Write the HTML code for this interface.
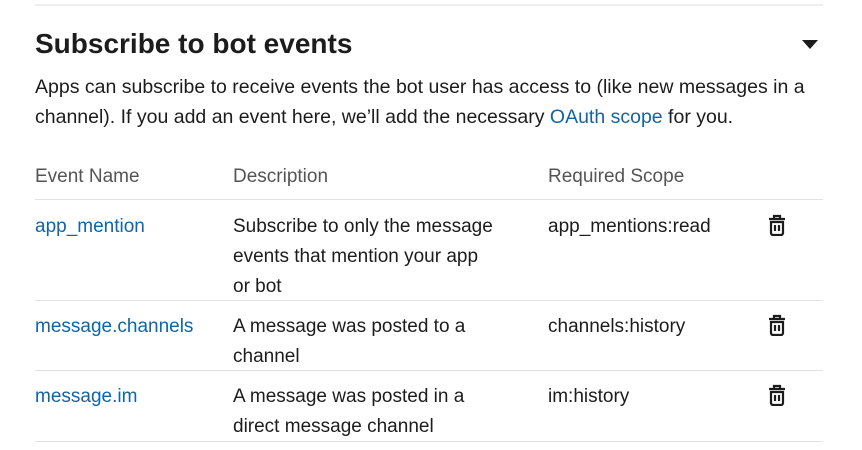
<!DOCTYPE html>
<html><head><style>
body{margin:0;width:862px;height:450px;background:#fff;font-family:"Liberation Sans",sans-serif;color:#1d1c1d;position:relative;overflow:hidden}
.a{position:absolute;white-space:nowrap;font-size:19px;line-height:30px}
.l{position:absolute;left:35px;width:788px;height:1px;background:#e2e2e2}
.h{color:#555455}
.b{color:#1264a3}
.d{color:#1d1c1d}
svg{position:absolute}
</style></head><body>
<div class="l" style="top:4px;height:2px;background:#eee"></div>
<div class="a" style="left:35px;top:27px;font-size:28px;font-weight:bold;line-height:34px">Subscribe to bot events</div>
<svg style="left:801px;top:39px" width="18" height="11"><path d="M1 1h16l-8 9z" fill="#1d1c1d"/></svg>
<div class="a" style="left:35px;top:72px;color:#1d1c1d;font-size:19.5px">Apps can subscribe to receive events the bot user has access to (like new messages in a<br>channel). If you add an event here, we’ll add the necessary <span class="b">OAuth scope</span> for you.</div>
<div class="a h" style="left:35px;top:162px">Event Name</div>
<div class="a h" style="left:233px;top:162px">Description</div>
<div class="a h" style="left:548px;top:162px">Required Scope</div>
<div class="l" style="top:199px"></div>
<div class="a b" style="left:35px;top:212px">app_mention</div>
<div class="a d" style="left:233px;top:212px">Subscribe to only the message<br>events that mention your app<br>or bot</div>
<div class="a d" style="left:548px;top:212px">app_mentions:read</div>
<div class="l" style="top:300px"></div>
<div class="a b" style="left:35px;top:312px">message.channels</div>
<div class="a d" style="left:233px;top:312px">A message was posted to a<br>channel</div>
<div class="a d" style="left:548px;top:312px">channels:history</div>
<div class="l" style="top:370px"></div>
<div class="a b" style="left:35px;top:382px">message.im</div>
<div class="a d" style="left:233px;top:382px">A message was posted in a<br>direct message channel</div>
<div class="a d" style="left:548px;top:382px">im:history</div>
<div class="l" style="top:441px"></div>
<svg style="left:767px;top:214px" width="20" height="22" viewBox="0 0 20 22"><g fill="none" stroke="#1d1c1d" stroke-width="2.2"><path d="M7 4V2h6v2M2 5h16M4 8h12v11a2 2 0 0 1-2 2H6a2 2 0 0 1-2-2z"/><path d="M8 11v6M12 11v6"/></g></svg>
<svg style="left:767px;top:314px" width="20" height="22" viewBox="0 0 20 22"><g fill="none" stroke="#1d1c1d" stroke-width="2.2"><path d="M7 4V2h6v2M2 5h16M4 8h12v11a2 2 0 0 1-2 2H6a2 2 0 0 1-2-2z"/><path d="M8 11v6M12 11v6"/></g></svg>
<svg style="left:767px;top:384px" width="20" height="22" viewBox="0 0 20 22"><g fill="none" stroke="#1d1c1d" stroke-width="2.2"><path d="M7 4V2h6v2M2 5h16M4 8h12v11a2 2 0 0 1-2 2H6a2 2 0 0 1-2-2z"/><path d="M8 11v6M12 11v6"/></g></svg>
</body></html>
